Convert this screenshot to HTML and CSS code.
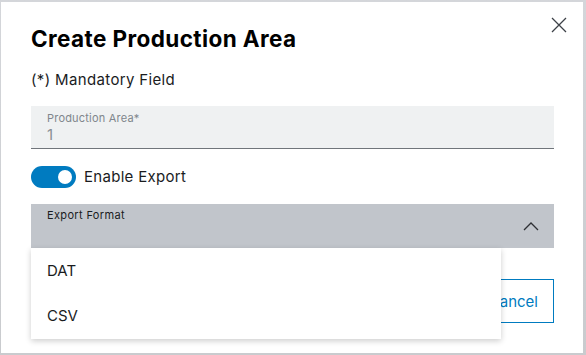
FILE: index.html
```html
<!DOCTYPE html>
<html>
<head>
<meta charset="utf-8">
<link rel="stylesheet" href="styles.css">
</head>
<body>
<div class="dialog">
  <button class="close" aria-label="Close">
    <svg width="16" height="16" viewBox="0 0 16 16"><path d="M1 1 L15 15 M15 1 L1 15" stroke="#3d4147" stroke-width="1.3" fill="none"/></svg>
  </button>
  <h1 class="title">Create Production Area</h1>
  <p class="mandatory">(*) Mandatory Field</p>
  <div class="field">
    <span class="field-label">Production Area*</span>
    <span class="field-value">1</span>
  </div>
  <div class="toggle-row">
    <span class="toggle"><span class="knob"></span></span>
    <span class="toggle-label">Enable Export</span>
  </div>
  <div class="select-wrap">
    <div class="select">
      <span class="select-label">Export Format</span>
      <svg class="chevron" width="16" height="9" viewBox="0 0 16 9"><path d="M1 8 L8 1 L15 8" stroke="#2e3034" stroke-width="1.3" fill="none"/></svg>
    </div>
    <ul class="menu">
      <li>DAT</li>
      <li>CSV</li>
    </ul>
  </div>
  <div class="footer">
    <button class="cancel">Cancel</button>
  </div>
</div>
</body>
</html>
```
FILE: styles.css
```css
html, body {
  margin: 0;
  padding: 0;
}
body {
  width: 586px;
  height: 355px;
  background: linear-gradient(#d4d6da, #c9cbce);
  font-family: Inter, "Noto Sans", sans-serif;
  overflow: hidden;
}
.dialog {
  position: relative;
  box-sizing: border-box;
  margin: 2px 0 0 1px;
  width: 582px;
  height: 351px;
  background: #fff;
  padding: 22px 29px 0 30px;
  color: #000;
}
.close {
  position: absolute;
  top: 15px;
  right: 16px;
  width: 16px;
  height: 16px;
  padding: 0;
  border: 0;
  background: none;
}
.close svg { display: block; }
.title {
  margin: 0;
  font-size: 22.5px;
  font-weight: 700;
  line-height: 30px;
  letter-spacing: 0.4px;
}
.mandatory {
  margin: 0;
  margin-top: 16px;
  font-size: 15px;
  line-height: 20px;
  letter-spacing: 0.35px;
  color: #1a1c1e;
}
.field {
  margin-top: 16px;
  height: 43px;
  box-sizing: border-box;
  background: #eff1f2;
  border-bottom: 1px solid #70757b;
  padding: 6px 16px 0;
  display: flex;
  flex-direction: column;
}
.field-label {
  font-size: 11px;
  line-height: 13px;
  letter-spacing: 0.2px;
  color: #80868c;
}
.field-value {
  font-size: 15px;
  line-height: 20px;
  color: #8a8f95;
}
.toggle-row {
  margin-top: 17px;
  display: flex;
  align-items: center;
  gap: 8px;
  height: 22px;
}
.toggle {
  width: 45px;
  height: 22px;
  border-radius: 11px;
  background: #007bc0;
  display: flex;
  align-items: center;
  justify-content: flex-end;
  padding-right: 4px;
  box-sizing: border-box;
}
.knob {
  width: 14px;
  height: 14px;
  border-radius: 50%;
  background: #fff;
}
.toggle-label {
  font-size: 15px;
  line-height: 20px;
  letter-spacing: 0.3px;
  color: #1a1c1e;
}
.select-wrap {
  position: relative;
  margin-top: 16px;
}
.select {
  height: 44px;
  box-sizing: border-box;
  background: #c1c5cb;
  padding: 5px 16px 0;
  display: flex;
  justify-content: space-between;
  position: relative;
}
.select-label {
  font-size: 11px;
  line-height: 13px;
  letter-spacing: 0.35px;
  color: #1a1c1e;
}
.chevron {
  position: absolute;
  right: 15px;
  top: 18px;
}
.menu {
  position: absolute;
  left: 0;
  top: 44px;
  width: 470px;
  height: 91px;
  margin: 0;
  padding: 0;
  list-style: none;
  background: #fff;
  box-shadow: 0 2px 6px rgba(0,0,0,0.2);
  z-index: 2;
}
.menu li {
  height: 45px;
  line-height: 45px;
  padding-left: 16px;
  font-size: 15px;
  color: #1a1c1e;
}
.footer {
  margin-top: 31px;
  display: flex;
  justify-content: flex-end;
}
.cancel {
  height: 44px;
  box-sizing: border-box;
  border: 1px solid #007bc0;
  background: #fff;
  color: #007bc0;
  font-family: Inter, "Noto Sans", sans-serif;
  font-size: 15px;
  padding: 0 15px;
}
```
